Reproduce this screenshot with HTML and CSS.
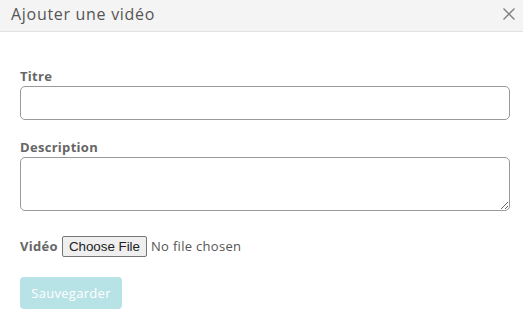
FILE: index.html
```html
<!DOCTYPE html>
<html lang="fr">
<head>
<meta charset="utf-8">
<title>Ajouter une vidéo</title>
<link rel="stylesheet" href="styles.css">
</head>
<body>
<div class="modal">
  <div class="modal-header">
    <h5 class="modal-title">Ajouter une vidéo</h5>
    <button class="close" type="button" aria-label="Fermer">
      <svg width="12" height="12" viewBox="0 0 12 12"><path d="M0.5 0.5L11.5 11.5M11.5 0.5L0.5 11.5" stroke="#808080" stroke-width="1.4" fill="none"/></svg>
    </button>
  </div>
  <form class="modal-body">
    <div class="form-group">
      <label class="label" for="titre">Titre</label>
      <input class="control" id="titre" type="text">
    </div>
    <div class="form-group">
      <label class="label" for="desc">Description</label>
      <textarea class="control area" id="desc"></textarea>
    </div>
    <div class="form-group file-row">
      <label class="label inline" for="video">Vidéo</label>
      <input class="file" id="video" type="file">
    </div>
    <button class="btn-save" type="button" disabled>Sauvegarder</button>
  </form>
</div>
</body>
</html>
```
FILE: styles.css
```css
html, body {
  margin: 0;
  padding: 0;
  background: #fff;
}
body {
  font-family: "Open Sans", "DejaVu Sans", sans-serif;
  color: #555;
}
.modal {
  width: 523px;
}
.modal-header {
  height: 32px;
  box-sizing: border-box;
  background: #f4f4f4;
  border-bottom: 1px solid #e2e2e2;
  display: flex;
  align-items: center;
  justify-content: space-between;
  padding: 0 8px 0 11px;
}
.modal-title {
  margin: 0;
  font-size: 16px;
  font-weight: 400;
  color: #555;
  letter-spacing: 0.7px;
  line-height: 20px;
  padding-bottom: 4px;
}
.close {
  border: 0;
  background: none;
  padding: 0;
  width: 12px;
  height: 12px;
  display: flex;
  margin-top: -3px;
}
.modal-body {
  display: block;
  padding: 34px 13px 20px 20px;
}
.form-group {
  margin-bottom: 17px;
}
.label {
  display: block;
  font-size: 13px;
  font-weight: 700;
  color: #666;
  line-height: 20px;
  letter-spacing: 0.3px;
}
.label.inline {
  display: inline;
}
.control {
  display: block;
  box-sizing: border-box;
  width: 490px;
  height: 34px;
  border: 1px solid #999;
  border-radius: 5px;
  margin: 0;
  font: inherit;
}
.area {
  height: 54px;
  resize: vertical;
}
.file-row {
  display: flex;
  align-items: center;
  gap: 4px;
  height: 22px;
  margin-top: 24px;
  margin-bottom: 20px;
}
.file {
  font-family: "Open Sans", sans-serif;
  font-size: 13px;
  color: #555;
  letter-spacing: 0.3px;
}
.file::file-selector-button {
  font-family: "Liberation Sans", Arial, sans-serif;
  font-size: 13.33px;
  letter-spacing: 0;
  color: #222;
  background: #efefef;
  border: 1px solid #767676;
  border-radius: 2px;
  padding: 1px 6px;
  margin-right: 4px;
  height: 21px;
}
.btn-save {
  display: block;
  width: 102px;
  height: 32px;
  border: 0;
  border-radius: 4px;
  background: #b7e2e6;
  color: #fff;
  font-family: "Open Sans", sans-serif;
  font-size: 13px;
  letter-spacing: 0.3px;
  padding: 0;
}
```
